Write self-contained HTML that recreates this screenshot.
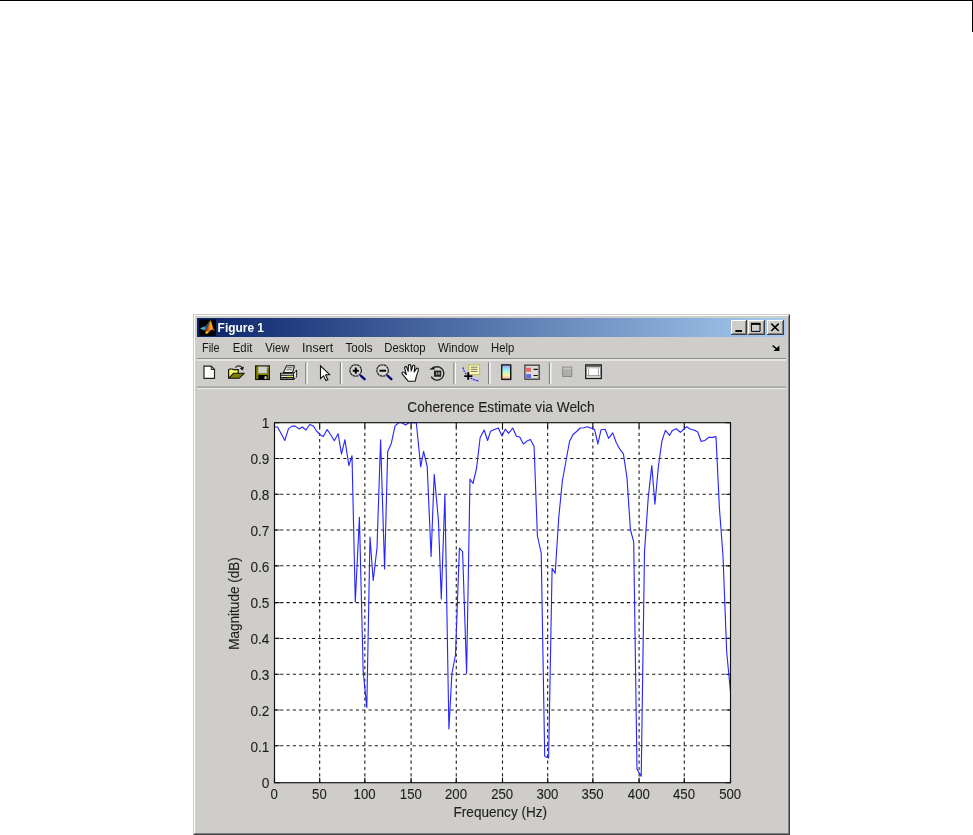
<!DOCTYPE html>
<html><head><meta charset="utf-8"><title>Figure 1</title>
<style>
html,body{margin:0;padding:0;background:#fff;}
body{width:973px;height:835px;position:relative;overflow:hidden;font-family:"Liberation Sans",Arial,sans-serif;}
.abs{position:absolute;}
#topline{left:0;top:0;width:973px;height:1px;background:#000;}
#rline{left:972px;top:0;width:1px;height:32px;background:#000;}
#win{left:193px;top:314px;width:597px;height:521px;background:#cfcdc9;box-sizing:border-box;
 border-left:1px solid #cdccc8;border-top:1px solid #cdccc8;border-right:1px solid #404040;border-bottom:1px solid #404040;}
#win2{left:0;top:0;width:595px;height:519px;box-sizing:border-box;border-left:1px solid #fff;border-top:1px solid #fff;border-right:1px solid #808080;border-bottom:1px solid #808080;}
#title{left:197px;top:318px;width:589px;height:19px;background:linear-gradient(to right,#0a246a 0%,#a6caf0 100%);}
#ttext{left:217.6px;top:320px;height:17px;line-height:17px;color:#fff;font-weight:bold;font-size:11.7px;white-space:nowrap;}
.menu{top:341px;height:14px;line-height:14px;font-size:11.5px;color:#111;white-space:nowrap;}
.sep{left:197px;width:589px;height:1px;}
#fig{left:197px;top:389px;width:589px;height:442px;background:#cfcdc9;}
.btn{top:320px;width:16px;height:14px;background:#d4d0c8;box-sizing:border-box;border:1px solid;border-color:#fff #404040 #404040 #fff;box-shadow:inset -1px -1px 0 #808080;}
</style></head><body>
<div class="abs" id="topline"></div><div class="abs" id="rline"></div>
<div class="abs" id="win"><div class="abs" id="win2"></div></div>
<div class="abs" id="title"></div>
<div class="abs sep" style="top:358px;background:#8c8c8a"></div>
<div class="abs sep" style="top:359px;height:2px;background:#e6e5e2"></div>
<div class="abs sep" style="top:386px;background:#b6b5b1"></div>
<div class="abs sep" style="top:387px;background:#a6a6a4"></div>
<div class="abs sep" style="top:388px;background:#f0f0ee"></div>
<div class="abs" id="fig"></div>
<svg id="chrome" width="973" height="835" viewBox="0 0 973 835" style="position:absolute;left:0;top:0">
<defs>
<linearGradient id="gOr" x1="0" y1="0" x2="1" y2="0"><stop offset="0" stop-color="#6a1406"/><stop offset="0.22" stop-color="#b83a0e"/><stop offset="0.5" stop-color="#f08a1c"/><stop offset="0.62" stop-color="#f6b226"/><stop offset="1" stop-color="#c03a10"/></linearGradient>
<linearGradient id="gBl" x1="0" y1="0" x2="1" y2="0"><stop offset="0" stop-color="#56c8ee"/><stop offset="0.6" stop-color="#3eaad4"/><stop offset="1" stop-color="#2a7ea0"/></linearGradient>
<linearGradient id="gCb" x1="0" y1="0" x2="0" y2="1"><stop offset="0" stop-color="#9a9af8"/><stop offset="0.38" stop-color="#a0f4f4"/><stop offset="0.72" stop-color="#f8f49a"/><stop offset="1" stop-color="#fca8a0"/></linearGradient>
</defs>
<!-- matlab logo -->
<g id="logo">
<rect x="199.2" y="319.5" width="16.8" height="16.4" fill="#000"/>
<path d="M204.8 326.6L207 324.2L209.2 321.3L208.7 325L206.4 328.4L205.4 327.2Z" fill="#1a566c"/>
<path d="M200 328.3L203.2 326.9L205.3 326.3L206.3 328.6L205.4 329.8L204.2 330.4L202.2 329.6Z" fill="url(#gBl)"/>
<path d="M204.6 330.6 L206.6 328.6 L208.6 324.8 L209.8 321.2 L210.4 320.2 L211 321.2 L212.4 325.6 L213.8 329.2 L215.2 331.6 L213.4 330.2 L212 329.4 L210.4 330.6 L208.6 332.8 L207 333.6 L205.8 333.2 Z" fill="url(#gOr)"/>
<path d="M205.4 332.2 L207.2 331 L208.4 332.6 L207 333.7 L205.8 333.4 Z" fill="#f8cc2c"/>
</g>
<!-- caption buttons -->
<g id="capbtn" shape-rendering="crispEdges">
<g><rect x="731" y="320" width="16" height="15" fill="#404040"/><rect x="731" y="320" width="15" height="14" fill="#fff"/><rect x="732" y="321" width="14" height="13" fill="#808080"/><rect x="732" y="321" width="13" height="12" fill="#cfcdc9"/></g>
<g><rect x="748" y="320" width="17" height="15" fill="#404040"/><rect x="748" y="320" width="16" height="14" fill="#fff"/><rect x="749" y="321" width="15" height="13" fill="#808080"/><rect x="749" y="321" width="14" height="12" fill="#cfcdc9"/></g>
<g><rect x="767" y="320" width="17" height="15" fill="#404040"/><rect x="767" y="320" width="16" height="14" fill="#fff"/><rect x="768" y="321" width="15" height="13" fill="#808080"/><rect x="768" y="321" width="14" height="12" fill="#cfcdc9"/></g>
</g>
<rect x="735.4" y="330" width="6.5" height="2" fill="#000"/>
<path d="M751.4 323.8H760V331.4H751.4Z" fill="none" stroke="#000" stroke-width="1"/><rect x="750.9" y="322.8" width="9.6" height="2" fill="#000"/>
<path d="M771.3 323.6L778.7 331M778.7 323.6L771.3 331" stroke="#000" stroke-width="1.5" fill="none"/>
<!-- menu arrow -->
<path d="M772.6 345.6L777.6 349.6" stroke="#000" stroke-width="1.4" fill="none"/><path d="M779.4 345.4V351H773.6Z" fill="#000"/>
<!-- toolbar separators -->
<g id="tsep" fill="none" stroke-width="1.2">
<path d="M305.8 362.3V384.3M340.4 362.3V384.3M454 362.3V384.3M488.6 362.3V384.3M549.5 362.3V384.3" stroke="#808080"/>
<path d="M307.1 362.3V384.3M341.7 362.3V384.3M455.3 362.3V384.3M489.9 362.3V384.3M550.8 362.3V384.3" stroke="#fff"/>
</g>
<!-- new -->
<path d="M204 366.2H211.2L214.5 369.5V378.3H204Z" fill="#fff" stroke="#222" stroke-width="1.2" stroke-linejoin="miter"/>
<path d="M211.2 366.2V369.5H214.5" fill="none" stroke="#222" stroke-width="1"/>
<!-- open -->
<g>
<path d="M228.6 378.2V369.7L229.6 369H232.6L233.4 369.7H238.2V373.2" fill="#fbfb62" stroke="#111" stroke-width="1.2"/>
<path d="M228.6 378.3L233.4 373.3H244.2L239 378.3Z" fill="#808000" stroke="#111" stroke-width="1.1" stroke-linejoin="round"/>
<path d="M235.4 367.6C237 365.2 240.8 365.2 242.4 368" fill="none" stroke="#2a2a2a" stroke-width="1.3"/>
<path d="M244 366.4L242.8 370.4L239.8 368.4Z" fill="#111"/>
</g>
<!-- save -->
<g>
<rect x="255.6" y="365.9" width="13.8" height="13.6" fill="#808000" stroke="#111" stroke-width="1.1"/>
<rect x="258.3" y="366.6" width="8.6" height="6.6" fill="#cfcfcf"/>
<rect x="258.3" y="375" width="9.4" height="4.4" fill="#000"/>
<rect x="264.6" y="376.3" width="2" height="2.6" fill="#e8e8e8"/>
<rect x="267.6" y="367" width="1" height="1.2" fill="#d0d0a0"/>
</g>
<!-- print -->
<g stroke="#111" stroke-width="1.05" stroke-linejoin="round">
<path d="M283.4 372.6L286.6 365.8H294.4L292.6 372.6Z" fill="#f4f4f4"/>
<path d="M287.2 367.8H292.6M286.4 369.8H291.8" fill="none" stroke="#333" stroke-width="0.8"/>
<path d="M280.6 373.2H293.6L296.6 370.4V376.6L293.6 379.4H280.6Z" fill="#e4e4e4"/>
<path d="M280.6 375.2H293.6M280.6 377.4H293.6M293.6 373.2V379.4" fill="none"/>
<path d="M280.9 378.4H293.4" stroke="#666" fill="none"/>
<rect x="287.4" y="375.9" width="3.6" height="1.2" fill="#f0f000" stroke="none"/>
<path d="M294.4 371.4L296.4 372.8M294.4 374.4L296.4 375.8M294.4 377L296 378" stroke="#fff" stroke-width="0.9" fill="none"/>
</g>
<!-- pointer -->
<path d="M320.5 365.8V378.6L323.5 375.8L325.9 380.6L327.9 379.7L325.6 375L329.6 374.6Z" fill="#fff" stroke="#111" stroke-width="1.1" stroke-linejoin="miter"/>
<!-- zoom in -->
<g>
<circle cx="355.7" cy="370.5" r="5.7" fill="#d9d8d4" stroke="#262626" stroke-width="1.3" stroke-dasharray="2.6 0.45"/>
<path d="M352.7 370.7H358.8M355.8 367.5V373.8" stroke="#000" stroke-width="2" fill="none"/>
<path d="M361 375.9L364.6 379.2" stroke="#000080" stroke-width="2.3" stroke-linecap="round"/>
</g>
<!-- zoom out -->
<g>
<circle cx="382.6" cy="370.5" r="5.7" fill="#d9d8d4" stroke="#262626" stroke-width="1.3" stroke-dasharray="2.6 0.45"/>
<path d="M379.4 370.7H386" stroke="#000" stroke-width="2" fill="none"/>
<path d="M387.8 375.9L391.4 379.2" stroke="#000080" stroke-width="2.3" stroke-linecap="round"/>
</g>
<!-- pan hand -->
<path d="M408.2 381.2L402 373.6C401.6 372.4 403 371.4 404.2 372.4L406.4 374.6L404.6 367.8C404.6 366.4 406.4 366.2 406.8 367.4L408.2 371.4L408.4 365.6C408.8 364.2 410.6 364.4 410.8 365.6L411.2 371L412.6 366C413.2 364.8 414.8 365.2 414.8 366.6L414.2 372L416.4 368.6C417.2 367.6 418.8 368.4 418.4 369.8L416.4 376.2L415.2 381.2Z" fill="#fff" stroke="#111" stroke-width="1.1" stroke-linejoin="round"/>
<!-- rotate 3d -->
<g>
<path d="M431.2 376.6A6.7 6.7 0 1 0 434.4 367.3" fill="none" stroke="#222" stroke-width="1.35"/>
<path d="M429.2 369.6L434.4 366L434.6 369.6Z" fill="#111"/>
<rect x="434.4" y="371" width="6.4" height="5.2" fill="#2a2a2a" stroke="#111" stroke-width="0.8"/>
<rect x="436.2" y="372.2" width="1.2" height="2.8" fill="#aaa"/><rect x="438.2" y="372" width="1.6" height="2.8" fill="#999"/>
</g>
<!-- data cursor -->
<g>
<path d="M463 367.4C463.6 370.6 464.6 372.4 466.4 374" fill="none" stroke="#2a2aff" stroke-width="1.3" stroke-dasharray="1.8 1"/>
<path d="M470.6 378.2C473 379.2 475.6 380.4 478.6 380.8" fill="none" stroke="#2a2aff" stroke-width="1.3" stroke-dasharray="2.2 0.8"/>
<rect x="468.8" y="364.8" width="10.8" height="9.8" fill="#fbfbc4" stroke="#c4c060" stroke-width="1.2"/>
<path d="M470.8 367.2H477.6M470.8 369.3H477.6M470.8 371.4H477.6" stroke="#77775c" stroke-width="1" fill="none"/>
<path d="M464.2 376.1H472.4M468.2 372.3V379.8" stroke="#000" stroke-width="1.9" fill="none"/>
</g>
<!-- colorbar -->
<rect x="502.4" y="365.6" width="9.6" height="15" fill="#9a9994" opacity="0.6"/>
<rect x="501.7" y="364.9" width="9" height="14.4" fill="url(#gCb)" stroke="#111" stroke-width="1.3"/>
<!-- legend -->
<g>
<rect x="525.6" y="365.8" width="14.6" height="14.4" fill="#aaa8a2" opacity="0.6"/>
<rect x="524.9" y="365.2" width="14.2" height="14" fill="#dddbd6" stroke="#3c3c3c" stroke-width="1.3"/>
<rect x="526.2" y="367.7" width="4.8" height="4" fill="#e86464"/>
<rect x="526.2" y="374.1" width="4.8" height="3.9" fill="#6464ea"/>
<path d="M533.5 369.4H537.8M533.5 375.5H537.8" stroke="#111" stroke-width="1.2" fill="none"/>
</g>
<!-- hide plot tools (disabled) -->
<rect x="562.6" y="367.1" width="9.2" height="9.4" fill="#adadab" stroke="#8a8a88" stroke-width="1"/>
<rect x="563.2" y="367.7" width="8" height="1.5" fill="#c8c7c3"/>
<!-- show plot tools -->
<g>
<rect x="585.8" y="365" width="15.4" height="13.4" fill="#fff" stroke="#111" stroke-width="1.4"/>
<rect x="586.5" y="365.4" width="14" height="1.8" fill="#555"/>
<rect x="586.5" y="366.8" width="14" height="1.6" fill="#c8c8c8"/>
<rect x="586.5" y="375.6" width="14" height="2.1" fill="#d0d0d0"/>
<path d="M588.6 368.4V375.4M598.4 368.4V375.4M586.5 375.5H600.5" stroke="#9a9a9a" stroke-width="0.9" fill="none"/>
</g>
</svg>

<svg id="plot" width="973" height="835" viewBox="0 0 973 835" style="position:absolute;left:0;top:0;will-change:transform"><rect x="274.5" y="422.7" width="456.0" height="360.00000000000006" fill="#fff" stroke="none"/><path d="M319.68 782.7V422.7M364.86 782.7V422.7M411.09 782.7V422.7M456.27 782.7V422.7M502.50 782.7V422.7M547.68 782.7V422.7M592.86 782.7V422.7M639.09 782.7V422.7M684.27 782.7V422.7M273.9 458.48H730.5M273.9 494.26H730.5M273.9 530.04H730.5M273.9 565.83H730.5M273.9 602.66H730.5M273.9 638.44H730.5M273.9 674.22H730.5M273.9 710.01H730.5M273.9 745.79H730.5" stroke="#1a1a1a" stroke-width="1.08" stroke-dasharray="3.2 3.104" fill="none"/><path d="M274.50 782.7v-5M274.50 422.7v5M274.5 422.70h5M730.5 422.70h-5M319.68 782.7v-5M319.68 422.7v5M274.5 458.48h5M730.5 458.48h-5M364.86 782.7v-5M364.86 422.7v5M274.5 494.26h5M730.5 494.26h-5M411.09 782.7v-5M411.09 422.7v5M274.5 530.04h5M730.5 530.04h-5M456.27 782.7v-5M456.27 422.7v5M274.5 565.83h5M730.5 565.83h-5M502.50 782.7v-5M502.50 422.7v5M274.5 602.66h5M730.5 602.66h-5M547.68 782.7v-5M547.68 422.7v5M274.5 638.44h5M730.5 638.44h-5M592.86 782.7v-5M592.86 422.7v5M274.5 674.22h5M730.5 674.22h-5M639.09 782.7v-5M639.09 422.7v5M274.5 710.01h5M730.5 710.01h-5M684.27 782.7v-5M684.27 422.7v5M274.5 745.79h5M730.5 745.79h-5M730.50 782.7v-5M730.50 422.7v5M274.5 782.70h5M730.5 782.70h-5" stroke="#111" stroke-width="1.15" fill="none"/><path d="M274.5 427.0 L277.6 427.0 L281.2 433.7 L284.8 440.5 L288.5 428.6 L292.0 426.1 L295.3 426.1 L299.0 428.9 L302.3 427.0 L306.0 430.0 L309.7 424.5 L313.2 425.9 L316.6 431.0 L320.0 434.7 L323.3 436.6 L327.1 429.6 L330.7 434.7 L334.3 440.7 L338.1 433.7 L341.5 454.2 L344.9 439.7 L348.9 465.6 L352.0 455.7 L355.3 602.0 L359.4 517.2 L363.2 672.0 L366.8 707.4 L370.0 537.0 L373.2 580.5 L377.0 548.0 L380.6 439.7 L384.6 569.0 L387.7 451.4 L391.3 443.4 L395.0 426.1 L398.5 422.8 L401.9 422.8 L405.5 424.9 L408.9 422.8 L412.6 422.8 L416.3 422.8 L420.7 466.8 L423.6 451.4 L427.2 466.5 L431.1 556.5 L434.2 474.2 L438.4 520.0 L441.3 599.0 L444.9 494.3 L448.9 729.0 L451.9 673.5 L455.5 655.0 L459.4 548.0 L462.6 551.6 L466.6 673.5 L470.0 479.1 L473.0 483.5 L476.6 468.0 L480.1 437.8 L484.1 430.0 L487.6 440.5 L490.5 431.3 L494.0 429.8 L498.3 428.0 L502.0 436.0 L505.3 429.2 L508.6 433.3 L512.7 428.0 L516.4 436.2 L519.7 437.0 L523.4 444.0 L527.0 441.1 L530.4 439.4 L534.1 446.5 L537.4 536.0 L541.2 553.0 L544.7 756.3 L548.6 758.1 L552.1 568.4 L555.2 573.3 L558.8 517.0 L562.4 480.5 L565.9 461.5 L569.5 441.5 L573.0 434.5 L576.6 431.5 L580.2 428.0 L583.5 427.7 L587.2 426.7 L590.9 428.0 L594.6 429.6 L597.9 444.0 L601.0 429.8 L605.1 429.2 L608.6 438.4 L612.7 432.9 L616.2 442.5 L619.8 449.2 L623.4 453.9 L627.0 478.0 L630.4 529.5 L633.7 541.9 L637.0 769.1 L641.2 776.3 L644.5 552.0 L648.2 498.0 L651.8 465.6 L654.9 504.2 L658.4 466.5 L661.9 441.0 L665.4 430.4 L669.6 435.3 L672.4 430.4 L676.1 428.8 L680.4 432.3 L683.5 429.5 L686.6 426.7 L690.5 429.2 L694.0 430.0 L697.7 432.0 L701.2 441.5 L705.1 440.3 L708.6 437.4 L712.5 437.4 L716.0 436.6 L719.4 508.0 L723.0 556.0 L726.7 652.0 L730.5 692.0" stroke="#2626ff" stroke-width="1.12" fill="none" stroke-linejoin="round"/><rect x="274.5" y="422.7" width="456.0" height="360.00000000000006" fill="none" stroke="#111" stroke-width="1.15"/><g font-family="Liberation Sans, Arial, sans-serif" font-size="15" fill="#1e1e1e" stroke="#1e1e1e" stroke-width="0.12"><text x="274.2" y="798.8" text-anchor="middle" textLength="7.3" lengthAdjust="spacingAndGlyphs">0</text><text x="319.4" y="798.8" text-anchor="middle" textLength="14.6" lengthAdjust="spacingAndGlyphs">50</text><text x="364.6" y="798.8" text-anchor="middle" textLength="22.0" lengthAdjust="spacingAndGlyphs">100</text><text x="410.8" y="798.8" text-anchor="middle" textLength="22.0" lengthAdjust="spacingAndGlyphs">150</text><text x="456.0" y="798.8" text-anchor="middle" textLength="22.0" lengthAdjust="spacingAndGlyphs">200</text><text x="502.2" y="798.8" text-anchor="middle" textLength="22.0" lengthAdjust="spacingAndGlyphs">250</text><text x="547.4" y="798.8" text-anchor="middle" textLength="22.0" lengthAdjust="spacingAndGlyphs">300</text><text x="592.6" y="798.8" text-anchor="middle" textLength="22.0" lengthAdjust="spacingAndGlyphs">350</text><text x="638.8" y="798.8" text-anchor="middle" textLength="22.0" lengthAdjust="spacingAndGlyphs">400</text><text x="684.0" y="798.8" text-anchor="middle" textLength="22.0" lengthAdjust="spacingAndGlyphs">450</text><text x="730.2" y="798.8" text-anchor="middle" textLength="22.0" lengthAdjust="spacingAndGlyphs">500</text><text x="269.3" y="787.5" text-anchor="end" textLength="7.6" lengthAdjust="spacingAndGlyphs">0</text><text x="269.3" y="751.5" text-anchor="end" textLength="18.9" lengthAdjust="spacingAndGlyphs">0.1</text><text x="269.3" y="715.5" text-anchor="end" textLength="18.9" lengthAdjust="spacingAndGlyphs">0.2</text><text x="269.3" y="679.5" text-anchor="end" textLength="18.9" lengthAdjust="spacingAndGlyphs">0.3</text><text x="269.3" y="643.5" text-anchor="end" textLength="18.9" lengthAdjust="spacingAndGlyphs">0.4</text><text x="269.3" y="607.5" text-anchor="end" textLength="18.9" lengthAdjust="spacingAndGlyphs">0.5</text><text x="269.3" y="571.6" text-anchor="end" textLength="18.9" lengthAdjust="spacingAndGlyphs">0.6</text><text x="269.3" y="535.6" text-anchor="end" textLength="18.9" lengthAdjust="spacingAndGlyphs">0.7</text><text x="269.3" y="499.6" text-anchor="end" textLength="18.9" lengthAdjust="spacingAndGlyphs">0.8</text><text x="269.3" y="463.6" text-anchor="end" textLength="18.9" lengthAdjust="spacingAndGlyphs">0.9</text><text x="269.3" y="427.6" text-anchor="end" textLength="7.6" lengthAdjust="spacingAndGlyphs">1</text><text x="500.9" y="411.5" text-anchor="middle" textLength="187.3" lengthAdjust="spacingAndGlyphs">Coherence Estimate via Welch</text><text x="500.3" y="816.8" text-anchor="middle" textLength="93.6" lengthAdjust="spacingAndGlyphs">Frequency (Hz)</text><text x="0.0" y="0.0" text-anchor="middle" textLength="92.5" lengthAdjust="spacingAndGlyphs" transform="translate(239.1 603.5) rotate(-90)">Magnitude (dB)</text></g><g font-family="Liberation Sans, Arial, sans-serif" font-size="12.2" fill="#151515"><text x="202.0" y="351.5" textLength="17.5" lengthAdjust="spacingAndGlyphs">File</text><text x="232.8" y="351.5" textLength="19.5" lengthAdjust="spacingAndGlyphs">Edit</text><text x="265.3" y="351.5" textLength="24.0" lengthAdjust="spacingAndGlyphs">View</text><text x="302.1" y="351.5" textLength="31.0" lengthAdjust="spacingAndGlyphs">Insert</text><text x="345.5" y="351.5" textLength="27.1" lengthAdjust="spacingAndGlyphs">Tools</text><text x="384.3" y="351.5" textLength="41.2" lengthAdjust="spacingAndGlyphs">Desktop</text><text x="438.1" y="351.5" textLength="40.5" lengthAdjust="spacingAndGlyphs">Window</text><text x="491.1" y="351.5" textLength="23.2" lengthAdjust="spacingAndGlyphs">Help</text></g><text x="217.6" y="331.9" font-family="Liberation Sans, Arial, sans-serif" font-weight="bold" font-size="12.5" fill="#fff" textLength="46.4" lengthAdjust="spacingAndGlyphs">Figure 1</text></svg>
</body></html>
